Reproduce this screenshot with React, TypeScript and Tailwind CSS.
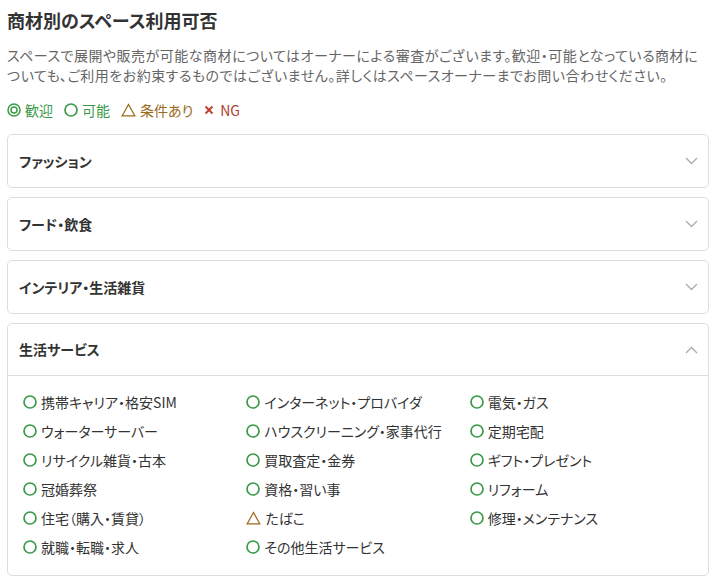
type Mark = 'welcome' | 'ok' | 'cond' | 'ng';

const categories = ['ファッション', 'フード・飲食', 'インテリア・生活雑貨'];

const services: { label: string; mark: Mark }[] = [
    { label: '携帯キャリア・格安SIM', mark: 'ok' },
    { label: 'インターネット・プロバイダ', mark: 'ok' },
    { label: '電気・ガス', mark: 'ok' },
    { label: 'ウォーターサーバー', mark: 'ok' },
    { label: 'ハウスクリーニング・家事代行', mark: 'ok' },
    { label: '定期宅配', mark: 'ok' },
    { label: 'リサイクル雑貨・古本', mark: 'ok' },
    { label: '買取査定・金券', mark: 'ok' },
    { label: 'ギフト・プレゼント', mark: 'ok' },
    { label: '冠婚葬祭', mark: 'ok' },
    { label: '資格・習い事', mark: 'ok' },
    { label: 'リフォーム', mark: 'ok' },
    { label: '住宅（購入・賃貸）', mark: 'ok' },
    { label: 'たばこ', mark: 'cond' },
    { label: '修理・メンテナンス', mark: 'ok' },
    { label: '就職・転職・求人', mark: 'ok' },
    { label: 'その他生活サービス', mark: 'ok' },
];

function MarkIcon({ mark }: { mark: Mark }) {
    if (mark === 'welcome') {
        return (
            <svg width="14" height="14" viewBox="0 0 14 14" className="shrink-0">
                <circle cx="7" cy="7" r="6" fill="none" stroke="#3a9a48" strokeWidth="1.5" />
                <circle cx="7" cy="7" r="3" fill="none" stroke="#3a9a48" strokeWidth="1.5" />
            </svg>
        );
    }
    if (mark === 'ok') {
        return (
            <svg width="14" height="14" viewBox="0 0 14 14" className="shrink-0">
                <circle cx="7" cy="7" r="6" fill="none" stroke="#3a9a48" strokeWidth="1.7" />
            </svg>
        );
    }
    if (mark === 'cond') {
        return (
            <svg width="15" height="14" viewBox="0 0 15 14" className="shrink-0">
                <path d="M7.5 1.5 L13.8 12.8 L1.2 12.8 Z" fill="none" stroke="#9a6b1e" strokeWidth="1.3" />
            </svg>
        );
    }
    return (
        <svg width="10" height="10" viewBox="0 0 10 10" className="shrink-0">
            <path d="M1.5 1.5 L8.5 8.5 M8.5 1.5 L1.5 8.5" stroke="#c0392b" strokeWidth="1.8" />
        </svg>
    );
}

function Chevron({ up }: { up?: boolean }) {
    return (
        <svg width="13" height="8" viewBox="0 0 13 8" className="shrink-0">
            <path
                d={up ? 'M1 7 L6.5 1.5 L12 7' : 'M1 1 L6.5 6.5 L12 1'}
                fill="none"
                stroke="#aaa"
                strokeWidth="1.3"
            />
        </svg>
    );
}

export default function App() {
    return (
        <div
            className="min-h-screen bg-white px-[7px] pt-[7px] text-[#333] [font-feature-settings:'palt']"
            style={{ fontFamily: '"Noto Sans CJK JP", "Noto Sans", sans-serif' }}
        >
            <h1 className="text-[18px] font-bold leading-[26px]">商材別のスペース利用可否</h1>

            <p className="mt-[12px] text-[14px] leading-[20px] tracking-[0.5px] text-[#666]">
                スペースで展開や販売が可能な商材についてはオーナーによる審査がございます。歓迎・可能となっている商材に
                <br />
                ついても、ご利用をお約束するものではございません。詳しくはスペースオーナーまでお問い合わせください。
            </p>

            <div className="mt-[15px] flex items-center gap-[11px] text-[14px] leading-[20px]">
                <span className="flex items-center gap-[4px] text-[#3a9a48]">
                    <MarkIcon mark="welcome" />
                    歓迎
                </span>
                <span className="flex items-center gap-[4px] text-[#3a9a48]">
                    <MarkIcon mark="ok" />
                    可能
                </span>
                <span className="flex items-center gap-[4px] text-[#9a6b1e]">
                    <MarkIcon mark="cond" />
                    条件あり
                </span>
                <span className="flex items-center gap-[6px] text-[#b23a2e]">
                    <MarkIcon mark="ng" />
                    NG
                </span>
            </div>

            <div className="mt-[14px] flex flex-col gap-[9px] pb-[4px]">
                {categories.map(name => (
                    <div key={name} className="rounded-[5px] border border-[#ddd]">
                        <div className="flex h-[52px] items-center justify-between pl-[11px] pr-[10px]">
                            <span className="text-[14px] font-bold">{name}</span>
                            <Chevron />
                        </div>
                    </div>
                ))}

                <div className="rounded-[5px] border border-[#ddd]">
                    <div className="flex h-[52px] items-center justify-between border-b border-[#ddd] pl-[11px] pr-[10px]">
                        <span className="text-[14px] font-bold">生活サービス</span>
                        <Chevron up />
                    </div>
                    <div className="grid grid-cols-3 gap-y-[9px] px-[15px] pt-[16px] pb-[18px]">
                        {services.map(s => (
                            <div key={s.label} className="flex h-[20px] items-center gap-[4px] text-[14px]">
                                <MarkIcon mark={s.mark} />
                                <span>{s.label}</span>
                            </div>
                        ))}
                    </div>
                </div>
            </div>
        </div>
    );
}
